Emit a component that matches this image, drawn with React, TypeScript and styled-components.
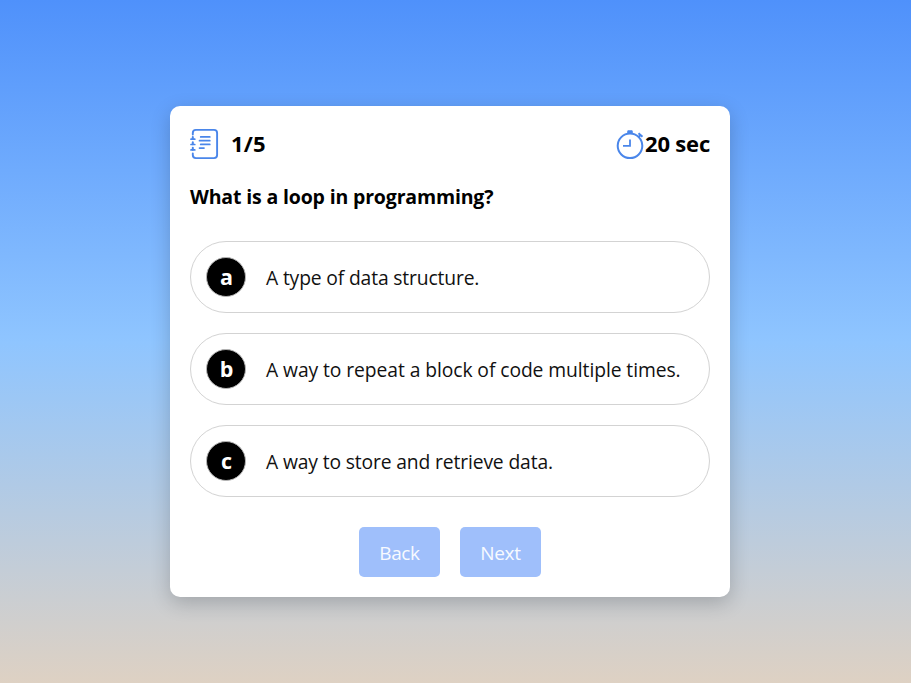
import React from "react";
import styled, { createGlobalStyle } from "styled-components";

const GlobalStyle = createGlobalStyle`
  * { box-sizing: border-box; }
  body { margin: 0; font-family: "Open Sans", "Noto Sans", sans-serif; color: #000; }
`;

const Page = styled.main`
  height: 683px;
  padding-top: 106px;
  padding-left: 170px;
  background: linear-gradient(180deg, #4f91fb 0%, #8fc5ff 50%, #ded1c3 100%);
`;

const Card = styled.section`
  width: 560px;
  height: 491px;
  padding: 20px 20px;
  background: #fff;
  border-radius: 10px;
  box-shadow: 0 6px 20px rgba(0, 0, 0, 0.2);
`;

const Header = styled.header`
  display: flex;
  justify-content: space-between;
  height: 36px;
`;

const Status = styled.div<{ $gap: number; $spacing: number }>`
  display: flex;
  align-items: center;
  gap: ${(p) => p.$gap}px;
  font-size: 22px;
  font-weight: 700;
  white-space: nowrap;
  letter-spacing: ${(p) => p.$spacing}px;
`;

const StatusText = styled.span`
  height: 36px;
  line-height: 34px;
`;

const Question = styled.h2`
  margin: 20px 0 29px;
  font-size: 19.5px;
  font-weight: 700;
  line-height: 30px;
  letter-spacing: -0.16px;
  white-space: nowrap;
`;

const Options = styled.div`
  display: flex;
  flex-direction: column;
  gap: 20px;
`;

const Option = styled.div<{ $spacing: number }>`
  display: flex;
  align-items: center;
  gap: 20px;
  height: 72px;
  padding-left: 15px;
  border: 1px solid #d3d3d3;
  border-radius: 36px;
  font-size: 19.3px;
  white-space: nowrap;
  letter-spacing: ${(p) => p.$spacing}px;
`;

const Letter = styled.span`
  display: grid;
  place-items: center;
  width: 40px;
  height: 40px;
  padding-left: 1px;
  border: 1px solid #b5b5b5;
  border-radius: 50%;
  background: #000;
  color: #fff;
  font-size: 21.5px;
  font-weight: 700;
  line-height: 30px;
  letter-spacing: 0;
`;

const OptionText = styled.span`
  padding-top: 1px;
  color: #111;
`;

const Actions = styled.footer`
  display: flex;
  justify-content: center;
  gap: 20px;
  margin-top: 30px;
`;

const Button = styled.button`
  width: 81px;
  height: 50px;
  padding: 2px 0 0;
  border: 0;
  border-radius: 5px;
  background: #9fbffb;
  color: #f7faff;
  font: 500 19px "Open Sans", "Noto Sans", sans-serif;
  letter-spacing: -0.35px;
`;

const NotebookIcon = () => (
  <svg width="29" height="36" viewBox="0 0 29 36" fill="none" stroke="#4a86ea" strokeWidth="1.9" strokeLinecap="round">
    <path d="M2.8 8.5V7Q2.8 3.9 5.9 3.9H24Q27.1 3.9 27.1 7V29Q27.1 32.1 24 32.1H5.9Q2.8 32.1 2.8 29V27.5" />
    <path d="M1 13.2H4.8M1 18.5H4.8M1 23.9H4.8" strokeWidth="1.7" />
    <path d="M2.8 11V13M2.8 16.3V18.3M2.8 21.7V23.7" strokeWidth="2" />
    <path d="M10.7 10.9H19.8M9.5 14.7H19.8M10.7 18.4H19.8M9.5 22.1H14" strokeWidth="1.7" />
  </svg>
);

const TimerIcon = () => (
  <svg width="29" height="36" viewBox="0 0 29 36" fill="none" stroke="#4a86ea" strokeWidth="2">
    <circle cx="14" cy="19.8" r="12.3" />
    <path d="M14 13.5V19.8H7" strokeWidth="1.8" />
    <path d="M11.8 4.8H16.2V7H11.8Z" fill="#4a86ea" strokeWidth="1" />
    <path d="M22.5 7.2L26.5 10.7M24.5 9L22.4 11.2" strokeWidth="2" />
  </svg>
);

const answers = [
  { letter: "a", text: "A type of data structure.", spacing: -0.15 },
  { letter: "b", text: "A way to repeat a block of code multiple times.", spacing: -0.08 },
  { letter: "c", text: "A way to store and retrieve data.", spacing: -0.14 },
];

export default function App() {
  return (
    <>
      <GlobalStyle />
      <Page>
        <Card>
          <Header>
            <Status $gap={12} $spacing={0.2}>
              <NotebookIcon />
              <StatusText>1/5</StatusText>
            </Status>
            <Status $gap={0} $spacing={-0.2}>
              <TimerIcon />
              <StatusText>20 sec</StatusText>
            </Status>
          </Header>
          <Question>What is a loop in programming?</Question>
          <Options>
            {answers.map((a) => (
              <Option key={a.letter} $spacing={a.spacing}>
                <Letter>{a.letter}</Letter>
                <OptionText>{a.text}</OptionText>
              </Option>
            ))}
          </Options>
          <Actions>
            <Button>Back</Button>
            <Button>Next</Button>
          </Actions>
        </Card>
      </Page>
    </>
  );
}
